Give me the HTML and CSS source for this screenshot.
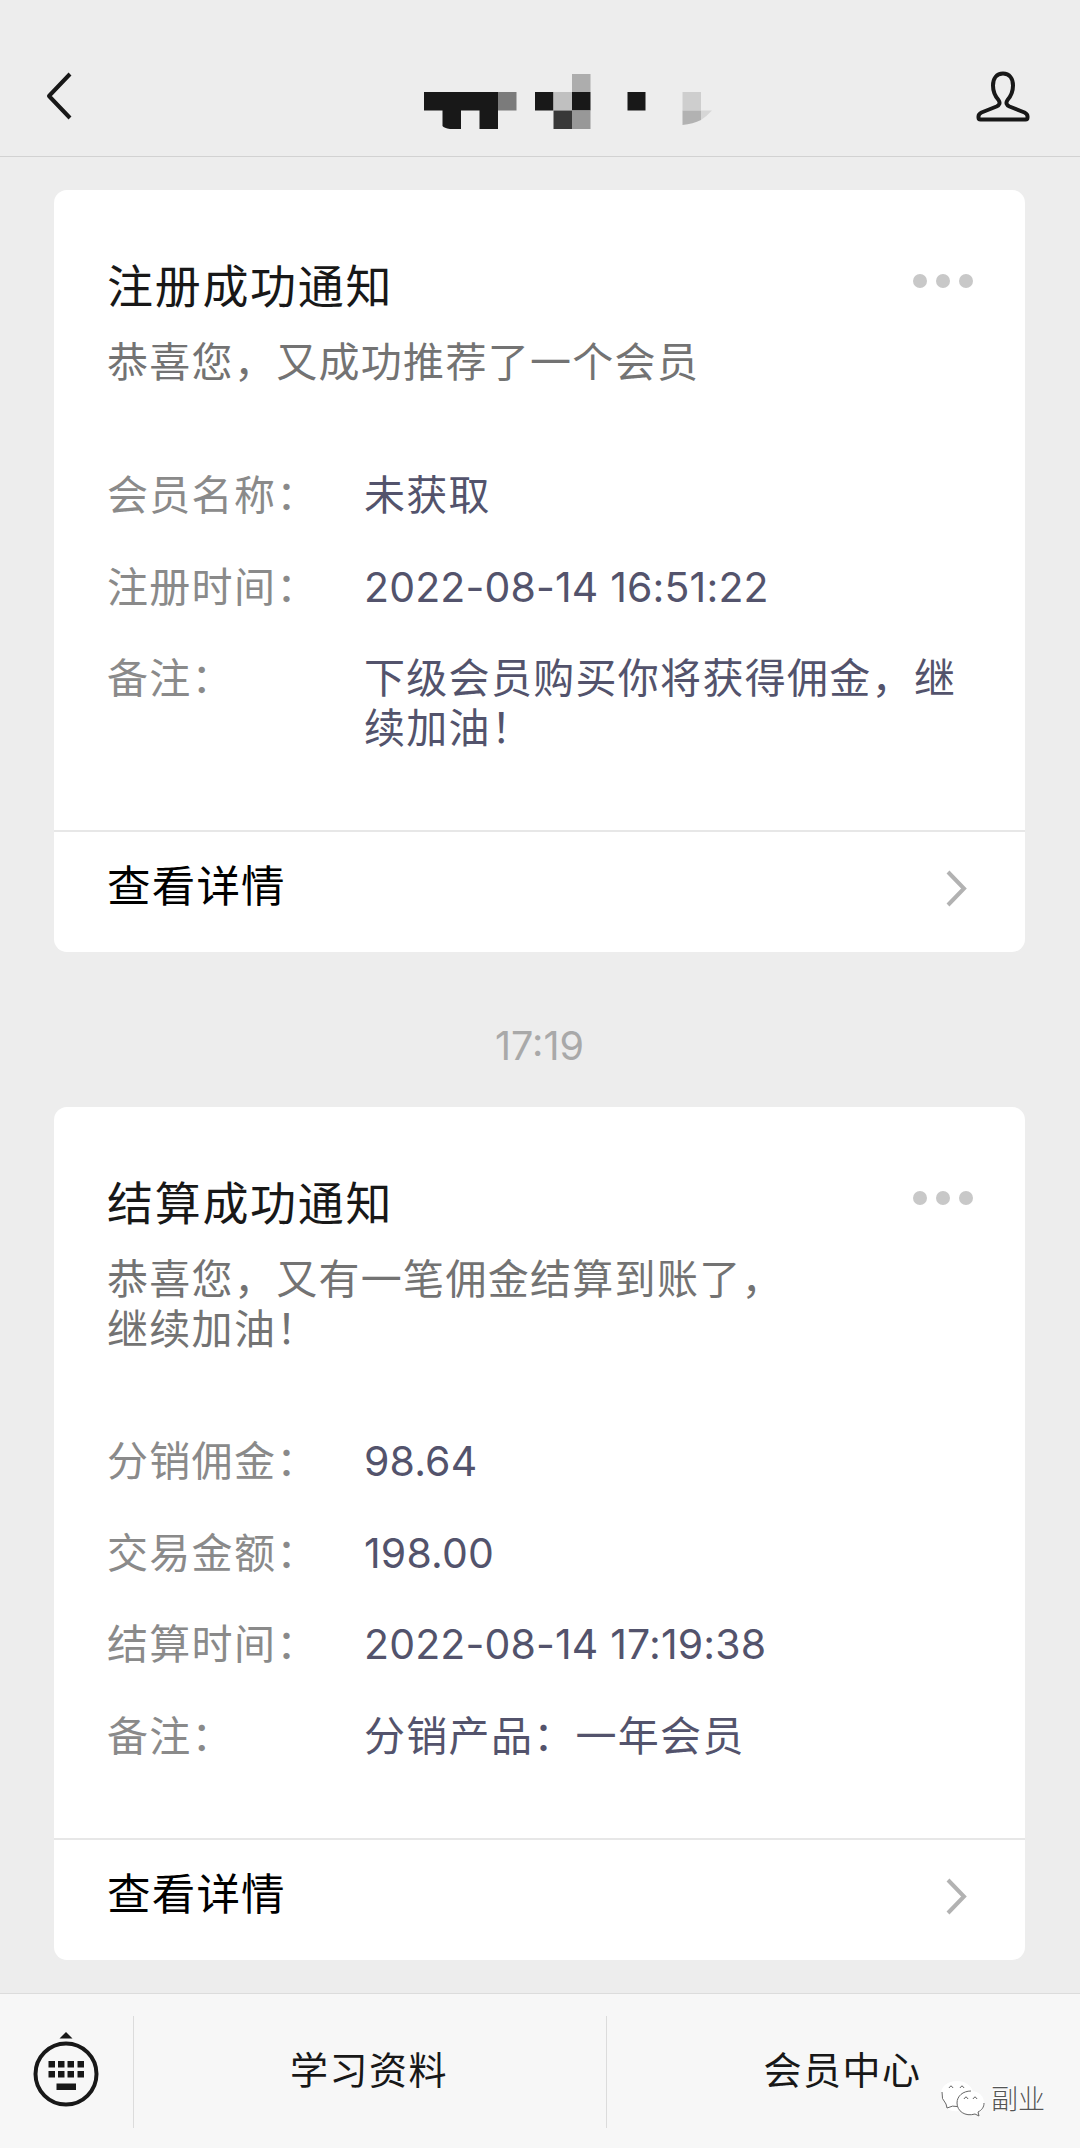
FILE: index.html
```
<!DOCTYPE html>
<html lang="zh-CN">
<head>
<meta charset="utf-8">
<title>服务通知</title>
<link rel="stylesheet" href="styles.css">
</head>
<body>
<header class="topbar">
  <svg class="back" width="30" height="52" viewBox="0 0 30 52"><path d="M25 4 4 26 25 48"/></svg>
  <svg class="mosaic" width="290" height="60" viewBox="0 0 290 60">
    <g fill="#181818"><path d="M0 20H74V57H55.500V38.500H37V57H26Q20 56 18.500 54V38.500H0Z"/><path d="M111 20h18.500v18.500H111zM148 20h18.500v18.500H148zM203.500 20h18v18.500h-18z"/></g>
    <path fill="#7b7b7b" d="M74 20h18.500v18.500H74z"/>
    <path fill="#c0c0c0" d="M129.500 20H148v18.500h-18.500z"/>
    <path fill="#adadad" d="M148 2h18.500v18H148z"/>
    <path fill="#383838" d="M129.500 38.500H148V57h-18.500z"/>
    <path fill="#989898" d="M148 38.500h18.500V57H148z"/>
    <path fill="#cecece" d="M258.500 20H277v18.500h-18.500z"/>
    <path fill="#b2b2b2" d="M258.500 38.500H277V48q-8 4-18.500 5z"/>
    <path fill="#d6d6d6" d="M277 38.500h11Q283 44 277 48z"/>
  </svg>
  <svg class="person" width="56" height="54" viewBox="0 0 56 54"><path d="M28 3.500C21.500 3.500 18 8.500 18 15.500C18 22 20 26 23.500 30C25.500 33 24.500 35 21.500 36.500L6.500 42.500Q3.500 44 3.500 46.500V47.500Q3.500 49.500 5.500 49.500H50.500Q52.500 49.500 52.500 47.500V46.500Q52.500 44 49.500 42.500L34.500 36.500C31.500 35 30.500 33 32.500 30C36 26 38 22 38 15.500C38 8.500 34.500 3.500 28 3.500Z"/></svg>
</header>

<main class="chat">
  <article class="card">
    <div class="body">
      <div class="head"><h2>注册成功通知</h2><span class="dots"><i></i><i></i><i></i></span></div>
      <p class="desc">恭喜您，又成功推荐了一个会员</p>
      <dl class="fields">
        <dt>会员名称：</dt><dd>未获取</dd>
        <dt>注册时间：</dt><dd class="num">2022-08-14 16:51:22</dd>
        <dt>备注：</dt><dd>下级会员购买你将获得佣金，继<br>续加油！</dd>
      </dl>
    </div>
    <div class="more"><span>查看详情</span><svg width="26" height="40" viewBox="0 0 26 40"><path d="M4 4 20 20.500 4 37"/></svg></div>
  </article>

  <time class="stamp">17:19</time>

  <article class="card second">
    <div class="body">
      <div class="head"><h2>结算成功通知</h2><span class="dots"><i></i><i></i><i></i></span></div>
      <p class="desc">恭喜您，又有一笔佣金结算到账了，<br>继续加油！</p>
      <dl class="fields">
        <dt>分销佣金：</dt><dd class="num">98.64</dd>
        <dt>交易金额：</dt><dd class="num">198.00</dd>
        <dt>结算时间：</dt><dd class="num">2022-08-14 17:19:38</dd>
        <dt>备注：</dt><dd>分销产品：一年会员</dd>
      </dl>
    </div>
    <div class="more"><span>查看详情</span><svg width="26" height="40" viewBox="0 0 26 40"><path d="M4 4 20 20.500 4 37"/></svg></div>
  </article>
</main>

<footer class="menu">
  <div class="keyboard">
    <svg width="68" height="76" viewBox="0 0 68 76">
      <path d="M34 1 40.500 7.500H27.500Z"/>
      <circle cx="34" cy="43" r="30.500"/>
      <path d="M16.500 30h6.500v6.500h-6.500zM26 30h6.500v6.500H26zM35.500 30H42v6.500h-6.500zM45.500 30H52v6.500h-6.500zM16.500 40h6.500v6.500h-6.500zM26 40h6.500v6.500H26zM35.500 40H42v6.500h-6.500zM45.500 40H52v6.500h-6.500zM24.500 52.500h19.500V59H24.500z"/>
    </svg>
  </div>
  <div class="item">学习资料</div>
  <div class="item">会员中心</div>
  <div class="watermark">
    <svg width="46" height="40" viewBox="0 0 46 40">
      <path d="M18 31Q12 32 8 29L8 26Q1 21 1 14C1 6 8 1 17 1C26 1 31 6 33 11"/>
      <path d="M44 23C44 31 37 35 31 35C22 35 17 29 17 23C17 16 23 11 31 11C39 11 44 16 44 23Z"/>
      <path class="line" d="M17 26.500Q13 25 7 28L6 24Q1 19 2 12M17 23C17 16 23 11 31 11M44 23C44 27 42 30 38 32L39 36 35 34C25 37 17 31 17 23M9 8Q11 4 13 8M20 8Q22 4 24 8M24 19Q26 15 28 19M33 19Q35 15 37 19"/>
    </svg>
    <span>副业</span>
  </div>
</footer>
</body>
</html>
```
FILE: styles.css
```
* { box-sizing: border-box; margin: 0; padding: 0; }

body {
  width: 1080px;
  height: 2148px;
  overflow: hidden;
  display: flex;
  flex-direction: column;
  background: #ededed;
  color: #181818;
  font-family: Inter, "Noto Sans CJK SC", sans-serif;
  font-weight: 400;
}

.topbar {
  height: 157px;
  flex: none;
  border-bottom: 1px solid #d2d2d2;
  display: grid;
  grid-template-columns: 424px 1fr auto;
  align-items: start;
  padding: 70px 49px 0 0;
}
.back { margin-left: 45px; }
.mosaic { margin-top: 2px; }
.back path, .person path {
  fill: none;
  stroke: #181818;
  stroke-width: 4;
  stroke-linejoin: round;
}

.chat { padding: 33px 55px 0 54px; height: 1836px; flex: none; }

.card {
  height: 762px;
  background: #fff;
  border-radius: 13px;
  display: flex;
  flex-direction: column;
}
.second { height: 853px; }
.body { flex: 1; padding: 66px 52px 0 53px; }
.head { display: flex; justify-content: space-between; height: 60px; }
h2 {
  font-size: 46px;
  line-height: 60px;
  font-weight: 400;
  letter-spacing: 1.7px;
}
.dots { display: flex; gap: 9px; padding-top: 18px; }
.dots i { width: 14px; height: 14px; border-radius: 50%; background: #c8c8c8; }

.desc, .fields {
  font-size: 41px;
  line-height: 50px;
  letter-spacing: 1.3px;
  color: #737373;
}
.desc { margin-top: 21px; white-space: nowrap; }
.fields {
  display: grid;
  grid-template-columns: 257px 1fr;
  row-gap: 41.700px;
  margin-top: 83px;
}
.second .fields { margin-top: 82px; }
dt { color: #8a8a8a; }
dd { color: #53536c; white-space: nowrap; }
.num { letter-spacing: 0.15px; }

.more {
  height: 122px;
  border-top: 2px solid #e7e7e7;
  padding: 0 55px 8px 53px;
  display: flex;
  align-items: center;
  justify-content: space-between;
  font-size: 43.500px;
  letter-spacing: 1.2px;
  color: #000;
}
.more span { padding-bottom: 10px; }
.more path { fill: none; stroke: #b2b2b2; stroke-width: 4; }

.stamp {
  display: block;
  height: 155px;
  padding-top: 69px;
  line-height: 50px;
  text-align: center;
  font-size: 39.500px;
  color: #a9a9a9;
}

.menu {
  position: relative;
  height: 155px;
  background: #f7f7f7;
  border-top: 1px solid #dcdcdc;
  display: grid;
  grid-template-columns: 133px 473px 1fr;
}
.keyboard { padding: 37px 0 0 32px; }
.keyboard path { fill: #181818; }
.keyboard circle { fill: none; stroke: #181818; stroke-width: 4; }
.item {
  height: 112px;
  margin-top: 22px;
  padding-right: 2px;
  border-left: 1px solid #dcdcdc;
  display: flex;
  justify-content: center;
  font-size: 38px;
  line-height: 108px;
  letter-spacing: 1.500px;
}
.watermark {
  position: absolute;
  left: 940px;
  top: 86px;
  display: flex;
  gap: 5px;
  font-size: 27px;
  line-height: 40px;
  font-weight: 300;
  color: #555;
  text-shadow: -1px -1px 0 #fff;
}
.watermark path { fill: #fff; }
.watermark .line { fill: none; stroke: #666; stroke-width: 1; }
```
